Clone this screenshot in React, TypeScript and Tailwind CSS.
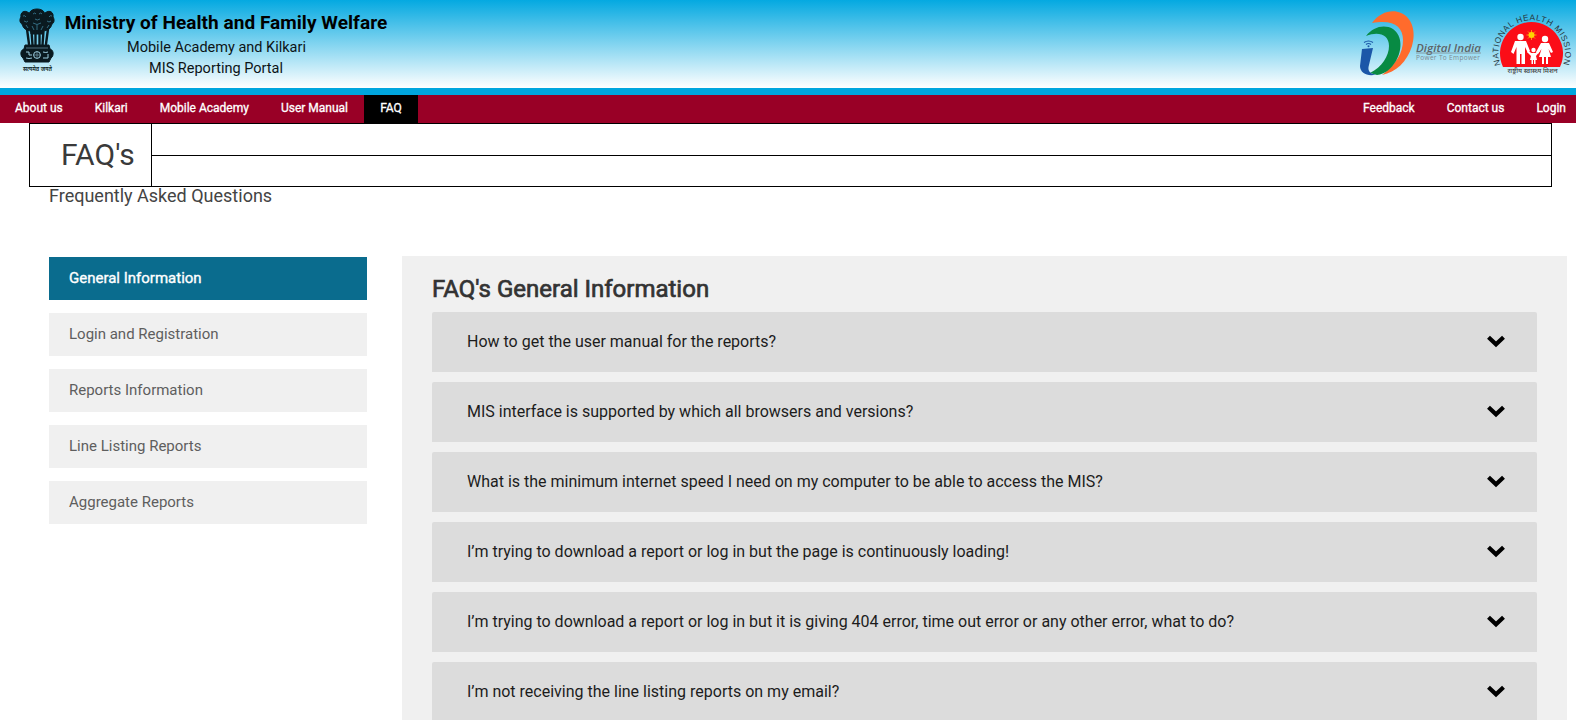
import React from "react";

const leftLinks = ["About us", "Kilkari", "Mobile Academy", "User Manual"];
const rightLinks = ["Feedback", "Contact us", "Login"];
const categories = [
  "General Information",
  "Login and Registration",
  "Reports Information",
  "Line Listing Reports",
  "Aggregate Reports",
];
const questions = [
  "How to get the user manual for the reports?",
  "MIS interface is supported by which all browsers and versions?",
  "What is the minimum internet speed I need on my computer to be able to access the MIS?",
  "I’m trying to download a report or log in but the page is continuously loading!",
  "I’m trying to download a report or log in but it is giving 404 error, time out error or any other error, what to do?",
  "I’m not receiving the line listing reports on my email?",
];

function Emblem() {
  return (
    <svg width="40" height="68" viewBox="0 0 40 68" className="shrink-0">
      <g fill="#0a1a20" stroke="#0a1a20" strokeWidth="1">
        <path d="M12 5C14 1 24 1 26 5C28 9 28 14 26 18L25 27H13L12 18C10 14 10 8 12 5Z" />
        <path d="M11 6C6 2 2 6 3 10C1 13 2 16 4 17C5 21 8 24 14 24L13 10Z" />
        <path d="M27 6C32 2 36 6 35 10C37 13 36 16 34 17C33 21 30 24 24 24L25 10Z" />
      </g>
      <g stroke="#0a1a20" strokeWidth="2.4" fill="none" strokeLinecap="round">
        <path d="M9 22L11 37M13.500 24L14.500 38M17.500 25V38M21.500 25V38M25.500 24L24.500 38M30 22L28 37" />
      </g>
      <g stroke="#4fa5c4" strokeWidth=".6" fill="none">
        <path d="M15 7q2 -2 3 0M21 7q2 -2 3 0M17 12q2 2 5 0M15 16q4 3 8 0M5 9q2 -1 3 1M31 10q1 -2 3 -1M6 14q3 2 4 0M29 14q2 2 4 0M14 19l2 4M19 18v5M25 19l-2 4M8 18l2 3M31 18l-2 3" />
      </g>
      <path d="M7 38H31L32 42C36 43 36 49 33 51L31 55H7L5 51C2 49 2 43 6 42Z" fill="#0a1a20" stroke="#0a1a20" />
      <g stroke="#9dcfe1" strokeWidth="1" fill="none">
        <circle cx="19" cy="48" r="3.4" />
        <path d="M8 45h3v3h3M8 51q3 1 6 0M25 45q3 1 5 0M25 51h5v-4" />
        <path d="M19 45V51M16 48H22M8 41H30" strokeWidth=".5" />
      </g>
      <text x="5" y="64" textLength="29" lengthAdjust="spacingAndGlyphs" fontSize="6.500" fontWeight="600" fill="#0a1a20" fontFamily="'Noto Sans', 'Noto Sans Devanagari', sans-serif">सत्यमेव जयते</text>
    </svg>
  );
}

function Logos() {
  return (
    <svg width="226" height="88" viewBox="0 0 226 88" className="shrink-0">
      <path d="M22 23C30 12 42 9 51 13C63 18 66 33 62 46C57 62 46 72 32 75C46 64 53 53 53 40C53 26 43 19 22 23Z" fill="#ff6b2c" />
      <path d="M16 36C23 27 34 24 43 29C53 36 52 51 46 61C41 69 35 74 27 75L20 73C32 67 39 56 39 46C39 35 29 31 16 36Z" fill="#078a43" />
      <path d="M12 49L23 48L18.500 67C18 71 20 74 26 74.500C18 77 10 73 10 66Z" fill="#1b57a8" />
      <g fill="none" stroke="#1b57a8" strokeWidth="1.1">
        <path d="M14 42.500Q18.500 39.500 23 42.500M16 44.500Q18.500 42.500 21 44.500" />
      </g>
      <circle cx="18.5" cy="46.300" r="1" fill="#1b57a8" />
      <text x="66" y="51.500" textLength="65" lengthAdjust="spacingAndGlyphs" fontSize="11.500" fontWeight="600" fontStyle="italic" fill="#5d6468" fontFamily="'Open Sans', sans-serif">Digital India</text>
      <path d="M66 53H131" stroke="#7d8a8f" strokeWidth=".8" />
      <text x="66" y="60" textLength="64" fontSize="6.500" fill="#7f8b90" fontFamily="'Open Sans', sans-serif">Power To Empower</text>
      <path d="M153 67A31.500 31.500 0 1 1 210 67Z" fill="#fb0d17" />
      <path id="mission-arc" d="M150.500 65A33.300 33.300 0 1 1 213 65" fill="none" />
      <text fontSize="8.300" fill="#26373f" fontFamily="'Liberation Sans', sans-serif">
        <textPath href="#mission-arc" textLength="127">NATIONAL HEALTH MISSION</textPath>
      </text>
      <g fill="#fff">
        <circle cx="170.500" cy="37" r="3.200" />
        <path d="M165 41H176L180 51L178 53L175 47V64H171.500V54H170V64H166.500V47L163.500 54L161 52Z" />
        <circle cx="195" cy="39" r="3.200" />
        <path d="M191 43H199L203 52L201 53L198.500 49L201 57H198V64H196V57H194V64H192V57H189L191.500 49L188 54L186 52Z" />
        <circle cx="183.500" cy="50" r="2.200" />
        <path d="M181.500 53H185.500L189 50L190 51L186 56L187 60H185.500V64H184V60H183V64H181.500V60H180L181 56L177 52L178 51Z" />
      </g>
      <circle cx="181.500" cy="35" r="3" fill="#ffd500" />
      <path d="M181.500 30V40M176.500 35H186.500M178 31.500L185 38.500M185 31.500L178 38.500" stroke="#ffd500" strokeWidth=".7" />
      <text x="157.500" y="72.500" textLength="50" lengthAdjust="spacingAndGlyphs" fontSize="5.500" fontWeight="500" fill="#444" fontFamily="'Noto Sans', sans-serif">राष्ट्रीय स्वास्थ्य मिशन</text>
    </svg>
  );
}

export default function App() {
  return (
    <div className="h-[720px] overflow-hidden bg-white font-['Roboto',sans-serif] text-[#333]">
      <header className="flex h-[95px] items-start justify-between border-b-[7px] border-[#00a6de] bg-[linear-gradient(to_bottom,#04a9e1,#ffffff)]">
        <div className="flex pl-[18px] pt-[7px]">
          <Emblem />
          <div className="ml-[6px] flex w-[324px] flex-col items-center whitespace-nowrap text-black">
            <h1 className="mt-[2px] text-[19px] leading-[27px] font-bold tracking-[0.05px]">Ministry of Health and Family Welfare</h1>
            <p className="mt-[1px] pr-[19px] text-[14.5px] leading-[21px] text-[#0c1417]">Mobile Academy and Kilkari</p>
            <p className="pr-[20px] text-[14.5px] leading-[21px] text-[#0c1417]">MIS Reporting Portal</p>
          </div>
        </div>
        <Logos />
      </header>

      <nav className="flex h-7 items-stretch justify-between bg-[#990026] pr-[10px] text-[12px] leading-[26px] text-white [-webkit-text-stroke:0.3px_white]">
        <div className="flex">
          <div className="flex gap-8 pr-4 pl-[15px]">
            {leftLinks.map((l) => (
              <a key={l}>{l}</a>
            ))}
          </div>
          <a className="w-[54px] bg-black text-center">FAQ</a>
        </div>
        <div className="flex gap-8">
          {rightLinks.map((l) => (
            <a key={l}>{l}</a>
          ))}
        </div>
      </nav>

      <div className="mr-6 ml-[29px] flex h-16 border border-black">
        <h2 className="w-[122px] border-r border-black pl-[31px] text-[30px] leading-[61px] font-normal text-[#3a3a3a]">FAQ's</h2>
        <div className="flex-1">
          <div className="h-8 border-b border-black" />
        </div>
      </div>
      <p className="ml-[49px] h-[69px] text-[18px] leading-[18px] text-[#444]">Frequently Asked Questions</p>

      <main className="flex items-start pl-[49px]">
        <ul className="mt-px flex w-[318px] flex-col gap-[13px]">
          {categories.map((c, i) => (
            <li
              key={c}
              className={
                i === 0
                  ? "h-[43px] bg-[#0a6c8e] pl-5 text-[15px] leading-[43px] text-white [-webkit-text-stroke:0.35px_white]"
                  : "h-[43px] bg-[#f0f0f0] pl-5 text-[15px] leading-[43px] text-[#5e5e5e]"
              }
            >
              {c}
            </li>
          ))}
        </ul>
        <section className="ml-[35px] h-[464px] w-[1165px] overflow-hidden bg-[#f0f0f0] px-[30px] pt-[20px]">
          <h3 className="mb-[10px] text-[24px] leading-[26px] font-normal [-webkit-text-stroke:0.7px_#333]">FAQ's General Information</h3>
          <div className="flex flex-col gap-[10px]">
            {questions.map((q) => (
              <div key={q} className="flex h-[60px] shrink-0 items-center justify-between rounded-t-[2px] bg-[#dcdcdc] pr-[31px] pl-[35px]">
                <span className="text-[16px] leading-[20px] text-[#1c1c1c]">{q}</span>
                <svg width="20" height="14" viewBox="0 0 20 14" className="-mt-[2px]">
                  <path d="M2.500 3.300L10 10.300L17.500 3.300" fill="none" stroke="#000" strokeWidth="4.200" />
                </svg>
              </div>
            ))}
          </div>
        </section>
      </main>
    </div>
  );
}
